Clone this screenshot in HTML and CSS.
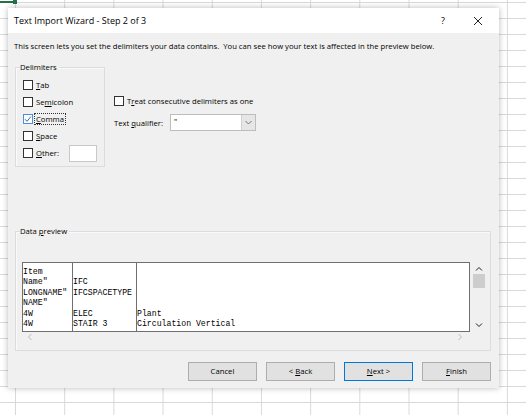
FILE: index.html
```html
<!DOCTYPE html>
<html lang="en">
<head>
    <meta charset="UTF-8">
    <meta name="viewport" content="width=device-width, initial-scale=1.0">
    <title>Text Import Wizard</title>
    <link rel="stylesheet" href="styles.css">
</head>
<body>

    <div class="cell-select"></div>

    <div class="dialog">
        <div class="titlebar">
            <span class="title">Text Import Wizard - Step 2 of 3</span>
            <span class="help">?</span>
            <svg class="close" width="10" height="10" viewBox="0 0 10 10">
                <path d="M1 1 L9 9 M9 1 L1 9" stroke="#222" stroke-width="1" fill="none"/>
            </svg>
        </div>

        <div class="content">
            <p class="desc">This screen lets you set the delimiters your data contains.&nbsp; You can see how your text is affected in the preview below.</p>

            <div class="options">
                <div class="group delims">
                    <span class="group-label">Delimiters</span>
                    <div class="check"><span class="box"></span><span><u>T</u>ab</span></div>
                    <div class="check"><span class="box"></span><span>Se<u>m</u>icolon</span></div>
                    <div class="check">
                        <span class="box checked">
                            <svg width="8" height="8" viewBox="0 0 8 8"><path d="M1 4.2 L3 6.3 L7 1.5" stroke="#2a6fc9" stroke-width="1" fill="none"/></svg>
                        </span>
                        <span class="focus"><u>C</u>omma</span>
                    </div>
                    <div class="check"><span class="box"></span><span><u>S</u>pace</span></div>
                    <div class="check"><span class="box"></span><span><u>O</u>ther:</span><span class="other-input"></span></div>
                </div>

                <div class="side">
                    <div class="check"><span class="box"></span><span>T<u>r</u>eat consecutive delimiters as one</span></div>
                    <div class="qualifier">
                        <span class="q-label">Text <u>q</u>ualifier:</span>
                        <div class="select">
                            <span class="select-value">"</span>
                            <span class="select-arrow">
                                <svg width="7" height="5" viewBox="0 0 7 5"><path d="M0.5 1 L3.5 4 L6.5 1" stroke="#777" stroke-width="1" fill="none"/></svg>
                            </span>
                        </div>
                    </div>
                </div>
            </div>

            <div class="group preview">
                <span class="group-label">Data <u>p</u>review</span>
                <div class="preview-area">
                    <div class="preview-box">
                        <div class="col col-1">Item
Name"
LONGNAME"
NAME"
4W
4W</div>
                        <div class="col col-2">
IFC
IFCSPACETYPE

ELEC
STAIR 3</div>
                        <div class="col col-3">



Plant
Circulation Vertical</div>
                    </div>
                    <div class="vscroll">
                        <svg width="8" height="6" viewBox="0 0 8 6"><path d="M1 4.5 L4 1.5 L7 4.5" stroke="#222" stroke-width="1" fill="none"/></svg>
                        <span class="thumb"></span>
                        <svg class="down" width="8" height="6" viewBox="0 0 8 6"><path d="M1 1.5 L4 4.5 L7 1.5" stroke="#222" stroke-width="1" fill="none"/></svg>
                    </div>
                </div>
                <div class="hscroll">
                    <svg width="6" height="8" viewBox="0 0 6 8"><path d="M4.5 1 L1.5 4 L4.5 7" stroke="#bbb" stroke-width="1" fill="none"/></svg>
                    <svg width="6" height="8" viewBox="0 0 6 8"><path d="M1.5 1 L4.5 4 L1.5 7" stroke="#bbb" stroke-width="1" fill="none"/></svg>
                </div>
            </div>

            <div class="buttons">
                <button>Cancel</button>
                <button>&lt; <u>B</u>ack</button>
                <button class="default"><u>N</u>ext &gt;</button>
                <button><u>F</u>inish</button>
            </div>
        </div>
    </div>

</body>
</html>
```

FILE: styles.css
```css
body {
    margin: 0;
    width: 526px;
    height: 415px;
    overflow: hidden;
    font-family: "Open Sans", "Noto Sans", sans-serif;
    font-size: 7.7px;
    color: #000;
    background-color: white;
    background-image:
        linear-gradient(to right, #d9d9d9 1px, transparent 1px),
        linear-gradient(to bottom, #d9d9d9 1px, transparent 1px);
    background-size: 49.2px 100%, 100% 16px;
    background-position: 15px 0, 0 2px;
}
.cell-select {
    position: absolute;
    left: 0;
    top: 1px;
    width: 15px;
    height: 2px;
    background-color: #217346;
}
.cell-select::after {
    content: "";
    position: absolute;
    right: -2px;
    top: -1px;
    width: 4px;
    height: 4px;
    background-color: #217346;
}
.dialog {
    position: absolute;
    left: 8px;
    top: 8px;
    width: 491px;
    height: 380px;
    background-color: #f0f0f0;
    box-shadow: 0 0 6px rgba(0, 0, 0, 0.28);
    display: flex;
    flex-direction: column;
}
.titlebar {
    height: 25px;
    flex-shrink: 0;
    background-color: white;
    display: flex;
    align-items: center;
    padding-left: 6px;
}
.title {
    font-size: 9px;
    flex: 1;
}
.help {
    font-size: 9px;
    margin-right: 28px;
}
.close {
    margin-right: 16px;
}
.content {
    padding: 0 8px 0 7px;
    flex: 1;
    display: flex;
    flex-direction: column;
}
.desc {
    margin: 8px 0 0 -1px;
    line-height: 10px;
}
u {
    text-decoration: underline;
    text-underline-offset: 1px;
}
.group {
    position: relative;
    border: 1px solid #dcdcdc;
    box-shadow: inset 1px 1px 0 #fafafa;
}
.group-label {
    position: absolute;
    top: -6px;
    left: 4px;
    line-height: 10px;
    padding-right: 2px;
    background-color: #f0f0f0;
}
.options {
    display: flex;
    margin-top: 15.5px;
}
.delims {
    padding: 9px 0 0 7px;
    width: 81px;
    height: 89px;
}
.check {
    height: 17px;
    display: flex;
    align-items: center;
    gap: 3px;
    white-space: nowrap;
}
.box {
    width: 8px;
    height: 8px;
    border: 1px solid #333;
    background-color: white;
    display: flex;
    align-items: center;
    justify-content: center;
}
.box.checked {
    border-color: #4a8fd8;
}
.focus {
    outline: 1px dotted #333;
    outline-offset: 0;
    padding: 0 1px;
    margin-left: -1px;
}
.other-input {
    width: 26px;
    height: 15px;
    margin-left: 7px;
    border: 1px solid #c8c8c8;
    background-color: white;
}
.side {
    padding: 26px 0 0 9px;
}
.qualifier {
    display: flex;
    align-items: center;
    margin-top: 4.5px;
}
.q-label {
    width: 56px;
}
.select {
    width: 84px;
    height: 15px;
    border: 1px solid #bdbdbd;
    background-color: white;
    display: flex;
}
.select-value {
    flex: 1;
    padding-left: 3px;
    line-height: 13px;
}
.select-arrow {
    width: 13px;
    background-color: #e6e6e6;
    border-left: 1px solid #d0d0d0;
    display: flex;
    align-items: center;
    justify-content: center;
}
.preview {
    margin-top: 64px;
    height: 88px;
    padding: 30px 4px 0 6px;
}
.preview-area {
    display: flex;
}
.preview-box {
    width: 446px;
    height: 68px;
    border: 1px solid #707070;
    background-color: white;
    display: grid;
    grid-template-columns: 50px 64px 1fr;
    overflow: hidden;
}
.col {
    white-space: pre;
    font-family: "Liberation Mono", monospace;
    font-size: 8.2px;
    line-height: 10.6px;
    padding-top: 4px;
    overflow: hidden;
}
.col-1, .col-2 {
    border-right: 1px solid #707070;
}
.vscroll {
    width: 14px;
    margin-left: 2px;
    height: 70px;
    display: flex;
    flex-direction: column;
    align-items: center;
    padding-top: 4px;
    box-sizing: border-box;
}
.thumb {
    width: 12px;
    height: 14px;
    margin-top: 2px;
    background-color: #cdcdcd;
}
.vscroll .down {
    margin-top: auto;
    margin-bottom: 4px;
}
.hscroll {
    width: 446px;
    height: 11px;
    display: flex;
    justify-content: space-between;
    align-items: center;
    padding: 0 5px;
    box-sizing: border-box;
}
.buttons {
    display: flex;
    justify-content: flex-end;
    gap: 9px;
    margin-top: 11px;
}
button {
    width: 69px;
    height: 19px;
    font-family: inherit;
    font-size: 7.7px;
    color: #000;
    background-color: #e1e1e1;
    border: 1px solid #adadad;
    padding: 0;
}
button.default {
    border-color: #0078d7;
}
```
